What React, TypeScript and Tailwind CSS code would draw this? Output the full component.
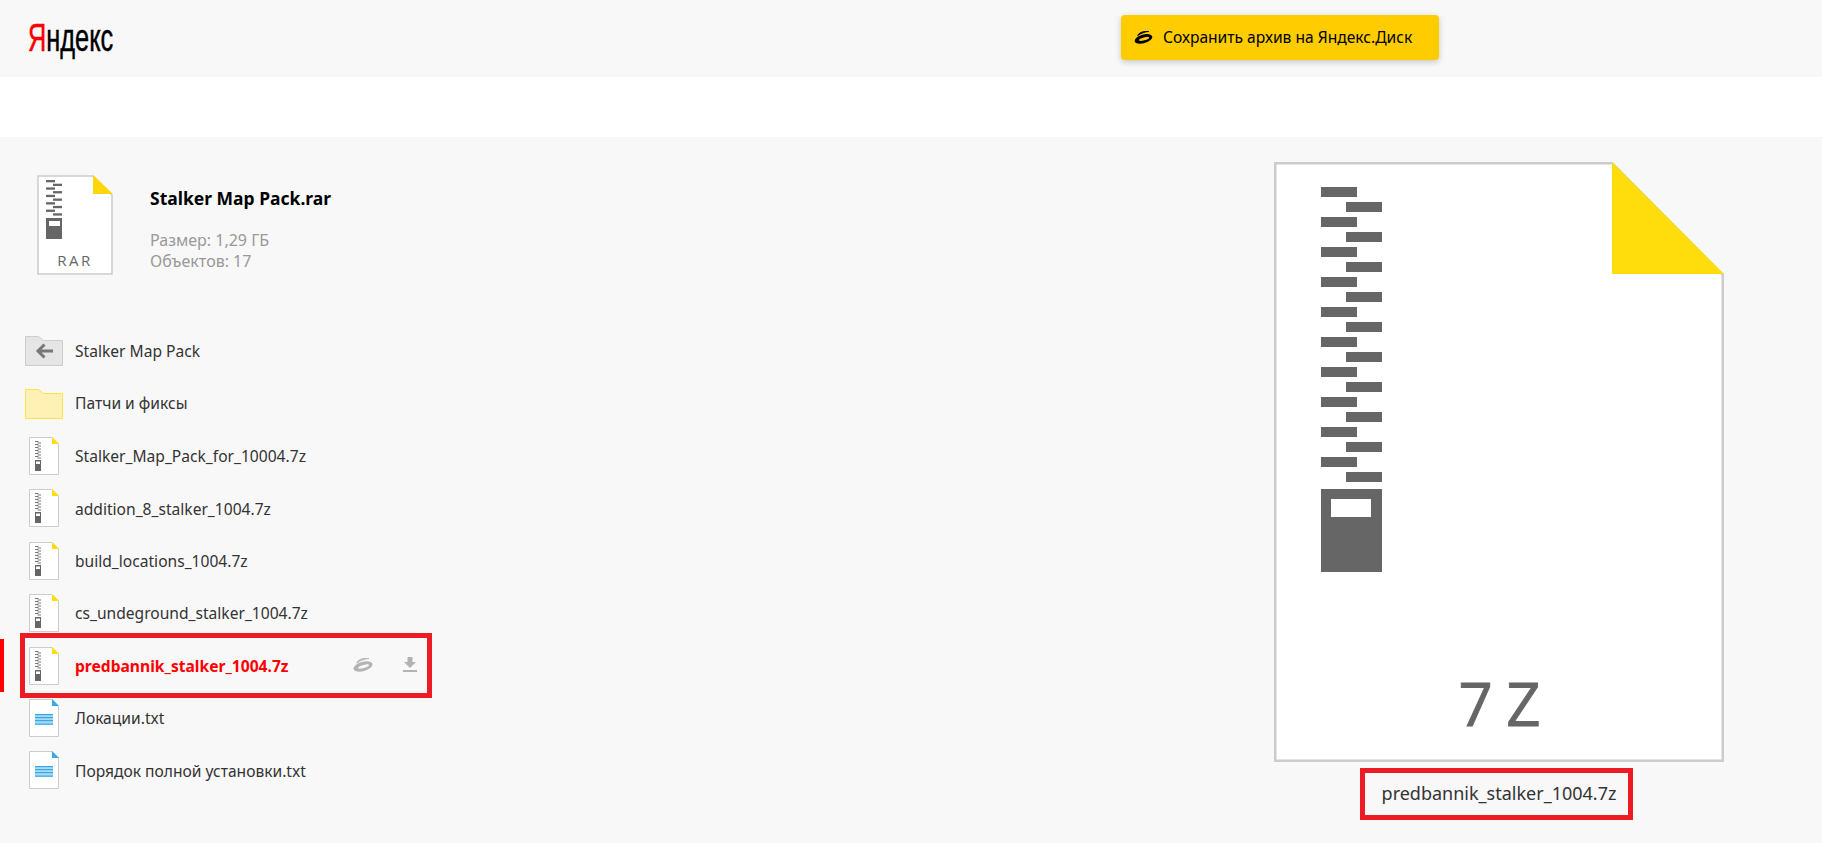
import React from 'react';

const files = [
  { name: 'Stalker_Map_Pack_for_10004.7z', kind: 'zip' },
  { name: 'addition_8_stalker_1004.7z', kind: 'zip' },
  { name: 'build_locations_1004.7z', kind: 'zip' },
  { name: 'cs_undeground_stalker_1004.7z', kind: 'zip' },
  { name: 'predbannik_stalker_1004.7z', kind: 'zip', active: true },
  { name: 'Локации.txt', kind: 'txt' },
  { name: 'Порядок полной установки.txt', kind: 'txt' },
];

function DiskIcon({ className }: { className?: string }) {
  return (
    <svg viewBox="0 0 20 14" className={className} fill="currentColor">
      <g transform="rotate(-16 10 8.500)">
        <path
          fillRule="evenodd"
          d="M.2 8.500a9.800 4.600 0 1 0 19.600 0a9.800 4.600 0 1 0-19.600 0zM5 8.700a5.600 1.500 0 1 0 11.200 0a5.600 1.500 0 1 0-11.200 0z"
        />
      </g>
      <path d="M3.600 5C5 1.800 10-.3 15.800.5 12 .8 8 2 3.600 5z" stroke="currentColor" strokeWidth="0.8" />
    </svg>
  );
}

function BackFolderIcon() {
  return (
    <svg viewBox="0 0 38 30" className="w-[38px] h-[30px]">
      <path d="M.5.5h13l5 4h19v25H.5z" fill="#e5e5e5" stroke="#ccc" />
      <path d="M28 15H13M19.500 8.500L13 15l6.500 6.500" fill="none" stroke="#777" strokeWidth="3" />
    </svg>
  );
}

function FolderIcon() {
  return (
    <svg viewBox="0 0 38 30" className="w-[38px] h-[30px]">
      <path d="M.5.5h13l5 4h19v25H.5z" fill="#fff0b3" stroke="#ffe04d" />
    </svg>
  );
}

function ZipIcon() {
  const bars = [0, 1, 2, 3, 4, 5, 6, 7, 8, 9, 10, 11];
  return (
    <svg viewBox="0 0 30 38" className="w-[30px] h-[38px]">
      <path d="M.5.5h22.500l6.500 6.500v30.500H.5z" fill="#fff" stroke="#ccc" />
      <path d="M23 0v7h7z" fill="#ffdd0d" />
      {bars.map((i) => (
        <rect key={i} x={i % 2 ? 8.5 : 6} y={4 + i * 1.5} width="3.500" height="1" fill="#777" />
      ))}
      <rect x="6" y="23" width="6" height="11" fill="#666" />
      <rect x="7" y="24.500" width="4" height="2.500" fill="#fff" />
    </svg>
  );
}

function TxtIcon() {
  return (
    <svg viewBox="0 0 30 38" className="w-[30px] h-[38px]">
      <path d="M.5.5h22.500l6.500 6.500v30.500H.5z" fill="#fff" stroke="#ccc" />
      <path d="M23 0v7h7z" fill="#38a9e4" />
      <rect x="6" y="15" width="18" height="11" fill="#a9daf4" />
      <rect x="6" y="15" width="18" height="1.200" fill="#38a9e4" />
      <rect x="6" y="18" width="18" height="1.200" fill="#38a9e4" />
      <rect x="6" y="21" width="18" height="1.200" fill="#38a9e4" />
      <rect x="6" y="24.500" width="18" height="1.200" fill="#38a9e4" />
    </svg>
  );
}

function RarIcon() {
  const bars = [0, 1, 2, 3, 4, 5, 6, 7, 8, 9];
  return (
    <svg viewBox="0 0 76 100" className="w-[76px] h-[100px]">
      <path d="M1 1h55l19 19v79H1z" fill="#fff" stroke="#ccc" strokeWidth="1.500" />
      <path d="M56 0v19h20z" fill="#ffd60a" />
      {bars.map((i) => (
        <rect key={i} x={i % 2 ? 16 : 9} y={5 + i * 3.7} width="9" height="2.300" fill="#666" />
      ))}
      <rect x="9" y="43" width="16" height="21" fill="#666" />
      <rect x="12" y="46" width="11" height="5" fill="#fff" />
      <text x="38" y="91" textAnchor="middle" fontSize="15" letterSpacing="2.500" fill="#666" fontFamily="'Open Sans', sans-serif">
        RAR
      </text>
    </svg>
  );
}

function BigZip() {
  const rows = [0, 1, 2, 3, 4, 5, 6, 7, 8, 9];
  return (
    <svg viewBox="0 0 450 600" className="w-[450px] h-[600px]">
      <path d="M1.250 1.250h337l110.500 111.500v486H1.250z" fill="#fff" stroke="#ccc" strokeWidth="2.500" />
      <path d="M338 0v112h112z" fill="#ffdd0d" />
      {rows.map((i) => (
        <g key={i} fill="#666">
          <rect x="47" y={25 + i * 30} width="36" height="10" />
          <rect x="72" y={40 + i * 30} width="36" height="10" />
        </g>
      ))}
      <rect x="47" y="327" width="61" height="83" fill="#666" />
      <rect x="57" y="337" width="40" height="18" fill="#fff" />
      <text x="225" y="564" textAnchor="middle" fontSize="60" fontWeight="500" letterSpacing="-1" fill="#666" stroke="#666" strokeWidth="0.8" fontFamily="'Open Sans', sans-serif">
        7 Z
      </text>
    </svg>
  );
}

export default function App() {
  return (
    <div className="h-[843px] overflow-hidden bg-[#f8f8f8] font-['Noto_Sans',sans-serif] text-[#333]">
      {/* Header */}
      <header className="h-[77px] flex items-start pl-[28px]">
        <div className="mt-[14px] origin-left scale-x-[0.65] font-['Liberation_Sans',sans-serif] text-[39px] leading-[48px] text-black [-webkit-text-stroke:0.5px_currentColor]">
          <span className="text-[#f00]">Я</span>ндекс
        </div>
        <button className="ml-auto mr-[383px] mt-[15px] w-[318px] h-[45px] flex items-center gap-[10px] pl-[13px] bg-[#ffcc00] rounded-[4px] shadow-[0_2px_6px_rgba(0,0,0,0.2)] text-black text-[15.600px]">
          <DiskIcon className="w-[19px] h-[13px]" />
          <span className="whitespace-nowrap">Сохранить архив на Яндекс.Диск</span>
        </button>
      </header>

      <div className="h-[60px] bg-white"></div>

      <main className="flex">
        <aside className="relative w-[1274px] pt-[38px]">
          {/* Archive info */}
          <div className="flex pl-[37px]">
            <RarIcon />
            <div className="ml-[37px]">
              <div className="mt-[9px] font-bold text-[17.500px] leading-[28px] text-black">Stalker Map Pack.rar</div>
              <div className="mt-[18px] text-[16px] leading-[21px] text-[#999]">
                <div>Размер: 1,29 ГБ</div>
                <div>Объектов: 17</div>
              </div>
            </div>
          </div>

          {/* File list */}
          <div className="mt-[50px] flex flex-col text-[15.600px]">
            <div className="h-[52.400px] flex items-center pl-[25px] gap-[12px]">
              <BackFolderIcon />
              <span>Stalker Map Pack</span>
            </div>
            <div className="h-[52.400px] flex items-center pl-[25px] gap-[12px]">
              <FolderIcon />
              <span>Патчи и фиксы</span>
            </div>
            {files.map((f) => (
              <div key={f.name} className="relative h-[52.400px] flex items-center pl-[29px] gap-[16px]">
                {f.kind === 'zip' ? <ZipIcon /> : <TxtIcon />}
                <span className={f.active ? 'pt-[2px] font-bold text-[#f00]' : 'pt-[2px]'}>{f.name}</span>
                {f.active && (
                  <>
                    <div className="absolute left-0 top-0 bottom-0 w-[4px] bg-[#f00]"></div>
                    <div className="absolute left-[20px] top-[-6px] w-[412px] h-[65px] border-[5px] border-[#ed1c24]"></div>
                    <DiskIcon className="absolute left-[353px] top-[19px] w-[20px] h-[14px] text-[#b3b3b3]" />
                    <svg viewBox="0 0 14 15" className="absolute left-[403px] top-[18px] w-[14px] h-[15px] text-[#b3b3b3]" fill="currentColor">
                      <path d="M4.500 0h5v5H13L7 11 1 5h3.500zM0 13h14v2H0z" />
                    </svg>
                  </>
                )}
              </div>
            ))}
          </div>
        </aside>

        {/* Preview */}
        <section className="relative w-[450px] pt-[25px]">
          <BigZip />
          <div className="mt-[19px] text-center text-[18px] leading-[24px] whitespace-nowrap">predbannik_stalker_1004.7z</div>
          <div className="absolute left-[86px] top-[631px] w-[273px] h-[52px] border-[5px] border-[#ed1c24]"></div>
        </section>
      </main>
    </div>
  );
}
